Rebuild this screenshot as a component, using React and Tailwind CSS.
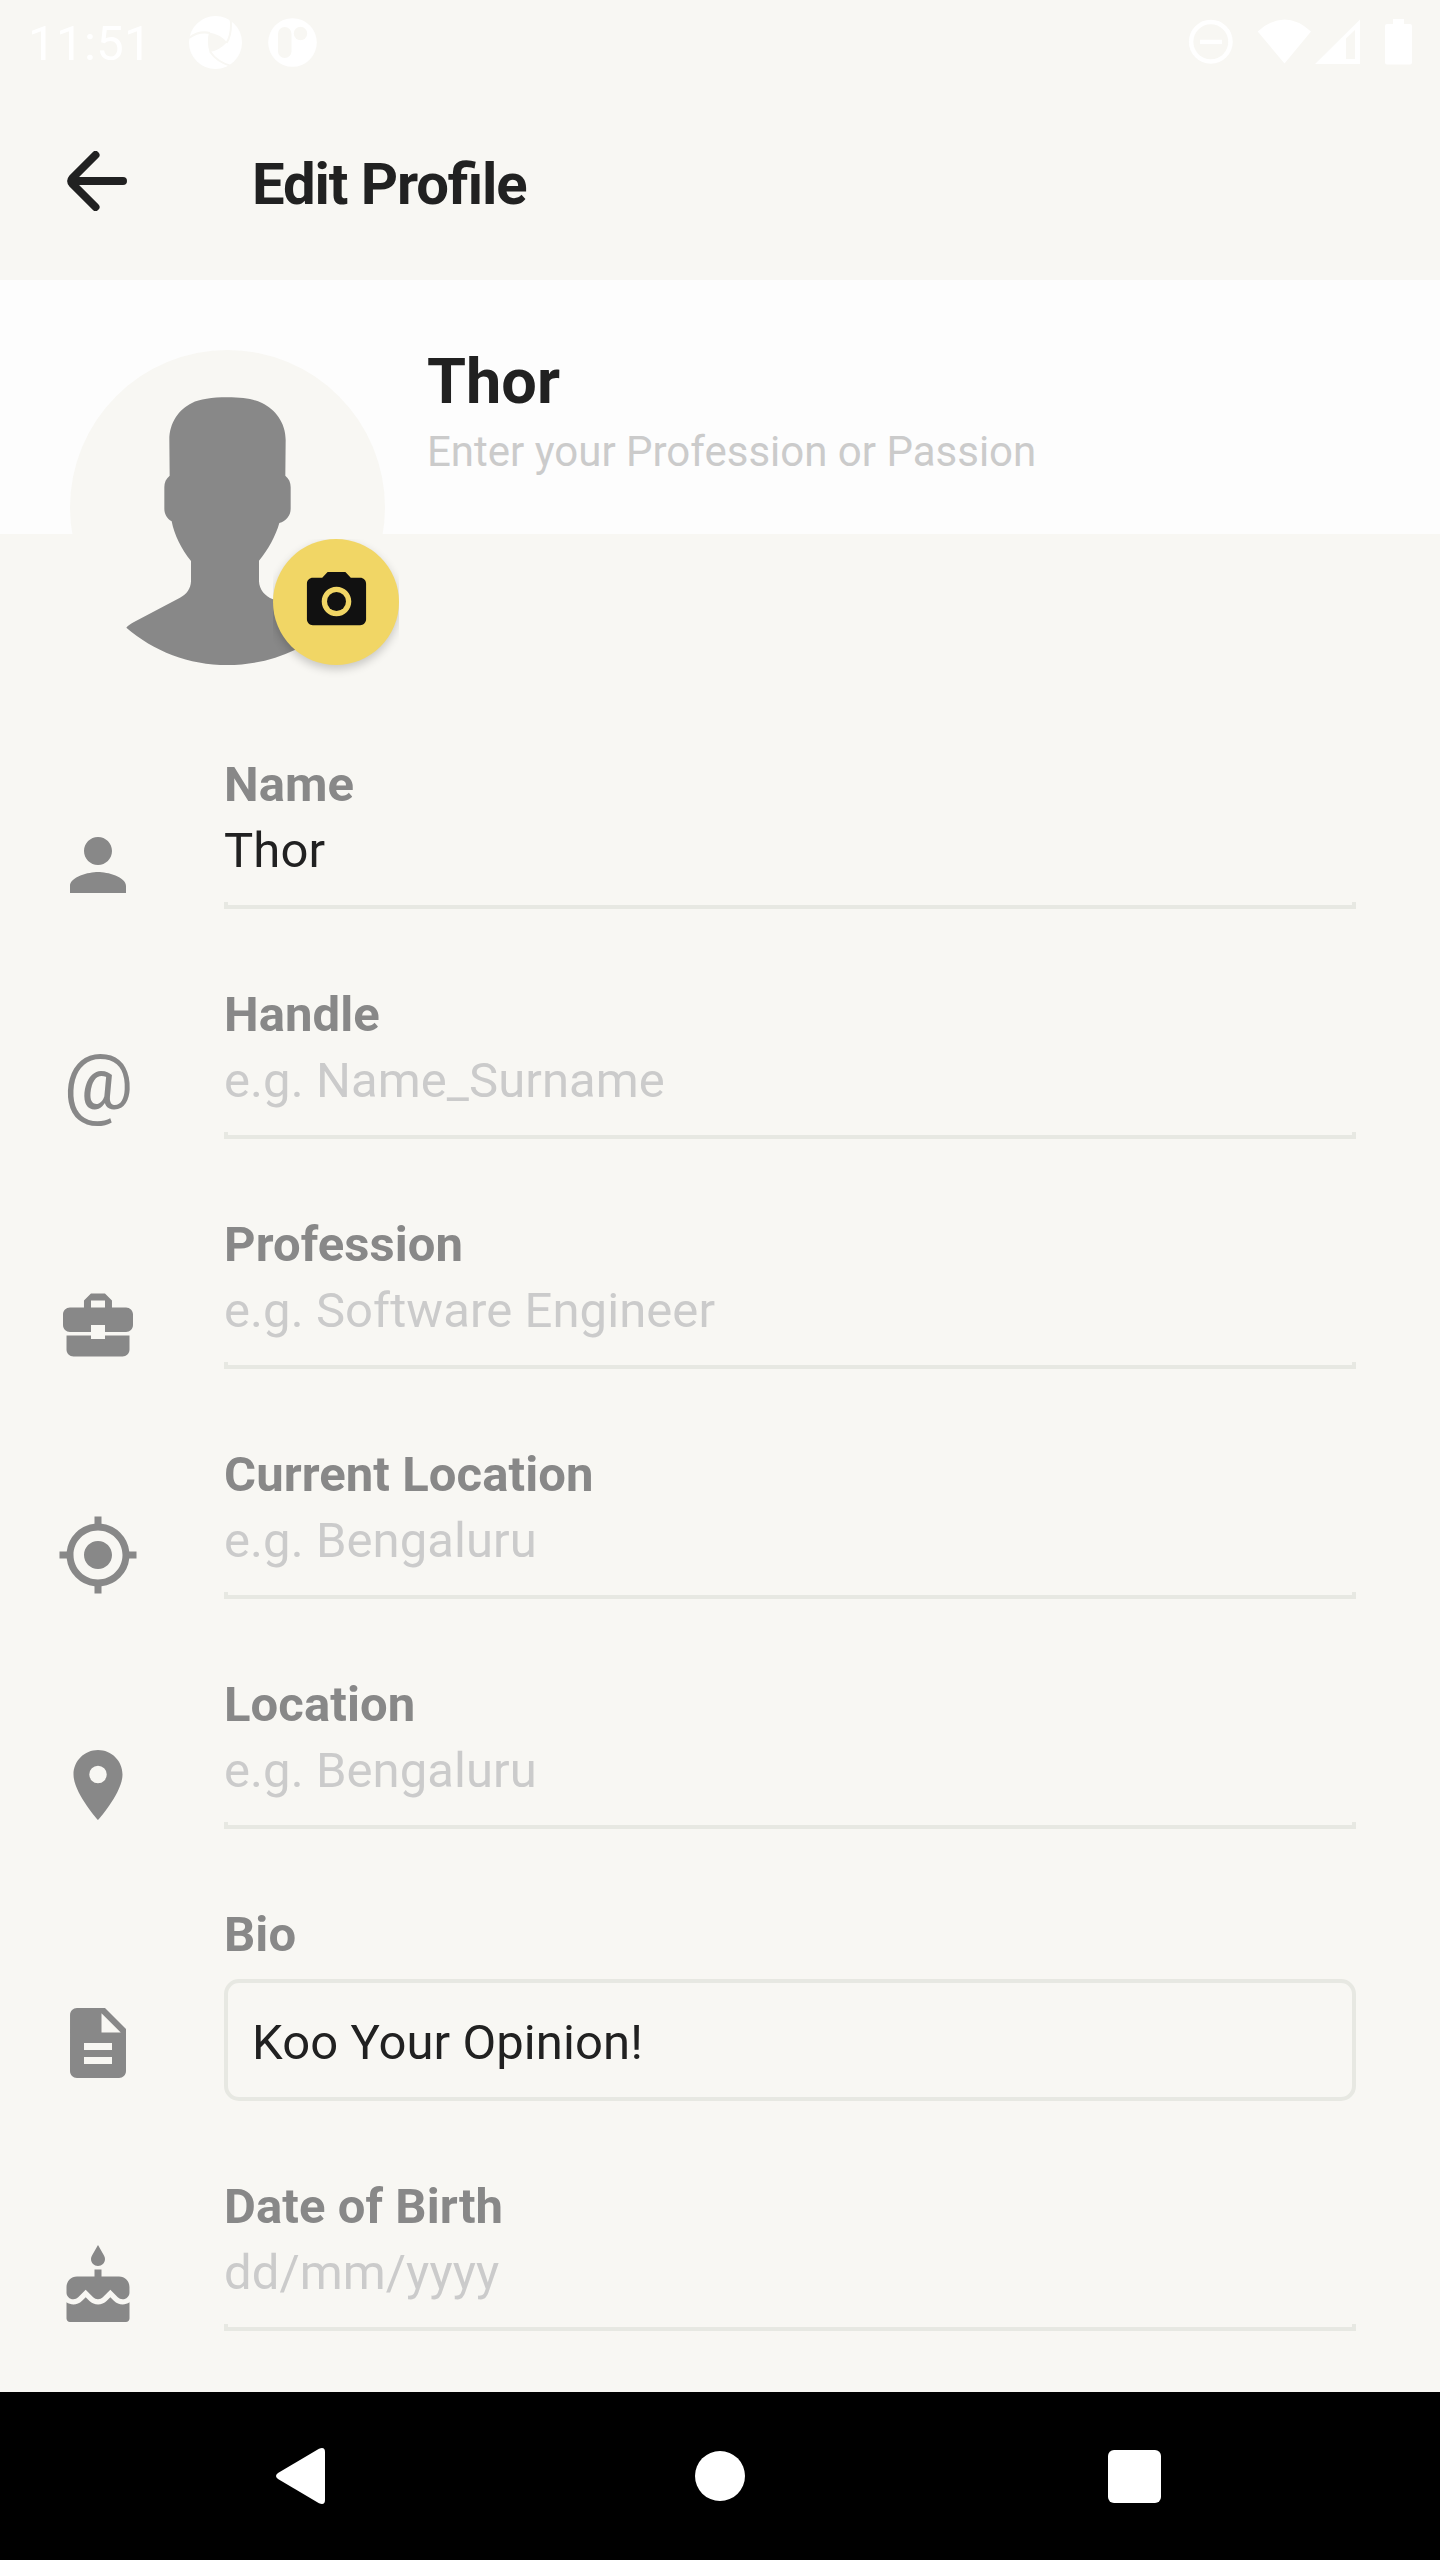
import React from "react";

const PATHS = {
  person: "M12 12c2.21 0 4-1.79 4-4s-1.79-4-4-4-4 1.79-4 4 1.79 4 4 4zm0 2c-2.67 0-8 1.34-8 4v2h16v-2c0-2.66-5.33-4-8-4z",
  briefcase: "M10 16v-1H3.01L3 19c0 1.11.89 2 2 2h14c1.11 0 2-.89 2-2v-4h-7v1h-4zm10-9h-4.01V5l-2-2h-4l-2 2v2H4c-1.1 0-2 .9-2 2v3c0 1.11.89 2 2 2h6v-2h4v2h6c1.1 0 2-.9 2-2V9c0-1.1-.9-2-2-2zm-6 0h-4V5h4v2z",
  target: "M12 8c-2.21 0-4 1.79-4 4s1.79 4 4 4 4-1.79 4-4-1.79-4-4-4zm8.94 3A8.994 8.994 0 0 0 13 3.06V1h-2v2.06A8.994 8.994 0 0 0 3.06 11H1v2h2.06A8.994 8.994 0 0 0 11 20.94V23h2v-2.06A8.994 8.994 0 0 0 20.94 13H23v-2h-2.06zM12 19c-3.87 0-7-3.13-7-7s3.13-7 7-7 7 3.13 7 7-3.13 7-7 7z",
  place: "M12 2C8.13 2 5 5.13 5 9c0 5.25 7 13 7 13s7-7.75 7-13c0-3.87-3.13-7-7-7zm0 9.5a2.5 2.5 0 0 1 0-5 2.5 2.5 0 0 1 0 5z",
  document: "M14 2H6c-1.1 0-1.99.9-1.99 2L4 20c0 1.1.89 2 1.99 2H18c1.1 0 2-.9 2-2V8l-6-6zm2 16H8v-2h8v2zm0-4H8v-2h8v2zm-3-5V3.5L18.5 9H13z",
  cake: "M12 6c1.11 0 2-.9 2-2 0-.38-.1-.73-.29-1.03L12 0l-1.71 2.97c-.19.3-.29.65-.29 1.03 0 1.1.9 2 2 2zm4.6 9.99l-1.07-1.07-1.08 1.07c-1.3 1.3-3.58 1.31-4.89 0l-1.07-1.07-1.09 1.07C6.75 16.64 5.88 17 4.96 17c-.73 0-1.4-.23-1.96-.61V21c0 .55.45 1 1 1h16c.55 0 1-.45 1-1v-4.61c-.56.38-1.23.61-1.96.61-.92 0-1.79-.36-2.44-1.01zM18 9h-5V7h-2v2H6c-1.66 0-3 1.34-3 3v1.54c0 1.08.88 1.96 1.96 1.96.52 0 1.02-.2 1.38-.57l2.14-2.13 2.13 2.13c.74.74 2.03.74 2.77 0l2.14-2.13 2.13 2.13c.37.37.86.57 1.38.57 1.08 0 1.96-.88 1.96-1.96V12C21 10.34 19.66 9 18 9z",
};

function Icon({ name }) {
  return (
    <svg viewBox="0 0 24 24" className="h-[84px] w-[84px] fill-[#888888]">
      <path d={PATHS[name]} />
    </svg>
  );
}

function StatusBar() {
  return (
    <header className="flex h-[84px] items-start text-white">
      <span className="mt-[15px] ml-[28px] w-[161px] text-[49px] leading-[58px] tracking-[0.4px]">11:51</span>
      <svg viewBox="0 0 53 53" className="mt-4 h-[53px] w-[53px]">
        <circle cx="26.5" cy="26.5" r="26.5" fill="#fff" />
        <path d="M20 16.500Q31 18 38 26.300Q30 35 20.500 36Q17.500 26 20 16.500Z" fill="#f8f7f3" />
        <path d="M0 22Q10 14.500 21 17M41.500 2Q43.500 17 37.500 27M21 35.500Q28 46 42 50" stroke="#f8f7f3" strokeWidth="2" fill="none" />
        <path d="M35 52Q39 51 42 49L46 53H35Z" fill="#f8f7f3" />
      </svg>
      <svg viewBox="0 0 49 49" className="mt-[18px] ml-[26px] h-[49px] w-[49px]">
        <circle cx="24.500" cy="24.500" r="24.300" fill="#fff" />
        <rect x="10" y="9" width="13.500" height="31" rx="6.700" fill="#f8f7f3" />
        <circle cx="32.500" cy="15.500" r="6.700" fill="#f8f7f3" />
      </svg>
      <svg viewBox="-20 0 260 84" className="ml-auto h-[84px] w-[260px] fill-white">
        <circle cx="10.800" cy="41.800" r="19.700" fill="none" stroke="#fff" strokeWidth="4.500" />
        <rect x="0" y="39.700" width="22" height="4.400" />
        <path d="M57.700 31.500Q84.500 7.500 111 31.500L84.500 63.500Z" />
        <path fillRule="evenodd" d="M115 64 160 19.500V64ZM146 38.500V59H155V30Z" />
        <path d="M193 19h11v5h6q2 0 2 2v36.500q0 2-2 2h-23q-2 0-2-2V26q0-2 2-2h6Z" />
      </svg>
    </header>
  );
}

function Avatar() {
  return (
    <div className="relative mt-[70px] ml-[70px] h-[315px] w-[315px] shrink-0">
      <svg viewBox="90 90 945 945" className="h-full w-full">
        <circle cx="562.500" cy="562.500" r="472.500" fill="#f8f7f3" />
        <path
          fill="#888888"
          d="M562 232C516 232 478 238 456 249C417 268 388 307 388 360L389 467C378 476 373 487 373 502V566C373 582 381 595 395 604C403 645 424 688 453 723V784C452 806 440 823 420 833L282 906Q265 915 259 923C340 993 447 1035 562 1035C634 1035 704 1019 766 989L850 900L699 838C674 829 658 808 657 784V722C684 690 707 648 718 609C738 603 752 587 752 566V502C752 487 747 476 736 467L737 360C737 307 705 268 666 249C638 236 608 232 562 232Z"
        />
      </svg>
      <div className="absolute top-[189px] left-[203px] h-[141px] w-[126px] overflow-hidden">
        <div className="flex h-[126px] w-[126px] items-center justify-center rounded-full bg-[#f1d665] pb-px shadow-[0_4px_10px_rgba(0,0,0,0.2)]">
          <svg viewBox="0 0 24 24" className="h-[71px] w-[71px] fill-[#111111]">
            <circle cx="12" cy="12" r="3.200" />
            <path d="M9 2 7.170 4H4c-1.100 0-2 .9-2 2v12c0 1.100.9 2 2 2h16c1.100 0 2-.9 2-2V6c0-1.100-.9-2-2-2h-3.170L15 2H9zm3 15c-2.760 0-5-2.240-5-5s2.240-5 5-5 5 2.240 5 5-2.240 5-5 5z" />
          </svg>
        </div>
      </div>
    </div>
  );
}

function Row({ icon, label, value, placeholder }) {
  return (
    <div className="mb-[76px] flex pl-14">
      {icon === "at" ? (
        <div className="w-[84px] pt-[56px] pl-px text-center text-[78px] leading-[84px] text-[#888888]">@</div>
      ) : (
        <div className="w-[84px] pt-[68px]">
          <Icon name={icon} />
        </div>
      )}
      <div className="ml-[84px] w-[1132px] pt-px text-[49px] leading-[58px] tracking-[0.08px]">
        <div className="font-bold text-[#888888]">{label}</div>
        <div className={value ? "mt-2 text-[#212121]" : "mt-2 text-[#cbcbcb]"}>{value || placeholder}</div>
        <div className="mt-[22px] h-[7px] border-x-4 border-[#e7e8e2] pt-[3px]">
          <div className="h-1 bg-[#e7e8e2]" />
        </div>
      </div>
    </div>
  );
}

function BioRow() {
  return (
    <div className="mb-[76px] flex pl-14">
      <div className="w-[84px] pt-24">
        <Icon name="document" />
      </div>
      <div className="ml-[84px] w-[1132px] pt-px text-[49px] leading-[58px] tracking-[0.08px]">
        <div className="font-bold text-[#888888]">Bio</div>
        <div className="mt-[15px] flex h-[122px] items-center rounded-[15px] border-4 border-[#e7e8e2] px-6 pt-[5px] text-[#212121]">
          Koo Your Opinion!
        </div>
      </div>
    </div>
  );
}

export default function App() {
  return (
    <div className="flex h-[2560px] w-[1440px] flex-col overflow-hidden bg-[#f8f7f3] font-['Roboto',sans-serif]">
      <StatusBar />
      <div className="flex h-[196px] items-center">
        <svg viewBox="0 0 60 60" className="mb-[2px] ml-[67px] h-[60px] w-[60px] fill-none stroke-[#212121]" strokeWidth="8" strokeLinecap="round" strokeLinejoin="round">
          <path d="M56 30H5M28.500 4 5.500 27Q3 30 5.500 33L28.500 56" />
        </svg>
        <h1 className="ml-[125px] pt-[3px] text-[58px] leading-[68px] font-bold tracking-[-1.100px] text-[#212121] [font-feature-settings:'liga'_1]">Edit Profile</h1>
      </div>
      <section className="h-[475px] shrink-0">
        <div className="flex h-[254px] bg-[#fdfdfd]">
          <Avatar />
          <div className="ml-[42px] pt-[65px]">
            <div className="text-[63px] leading-[74px] font-bold text-[#212121]">Thor</div>
            <div className="mt-[8px] text-[42px] leading-[50px] text-[#cbcbcb]">Enter your Profession or Passion</div>
          </div>
        </div>
      </section>
      <main className="h-[1637px] shrink-0 overflow-hidden">
        <Row icon="person" label="Name" value="Thor" />
        <Row icon="at" label="Handle" placeholder="e.g. Name_Surname" />
        <Row icon="briefcase" label="Profession" placeholder="e.g. Software Engineer" />
        <Row icon="target" label="Current Location" placeholder="e.g. Bengaluru" />
        <Row icon="place" label="Location" placeholder="e.g. Bengaluru" />
        <BioRow />
        <Row icon="cake" label="Date of Birth" placeholder="dd/mm/yyyy" />
      </main>
      <nav className="flex h-[168px] shrink-0 items-center bg-black">
        <svg viewBox="0 0 49 56" className="ml-[276px] h-[56px] w-[49px] fill-white">
          <path d="M43 .8Q49-1.500 49 4V52Q49 57.500 43 55.200L2 31Q-2 28 2 25Z" />
        </svg>
        <div className="ml-[370px] h-[50px] w-[50px] rounded-full bg-white" />
        <div className="ml-[363px] h-[53px] w-[53px] rounded-[6px] bg-white" />
      </nav>
    </div>
  );
}
